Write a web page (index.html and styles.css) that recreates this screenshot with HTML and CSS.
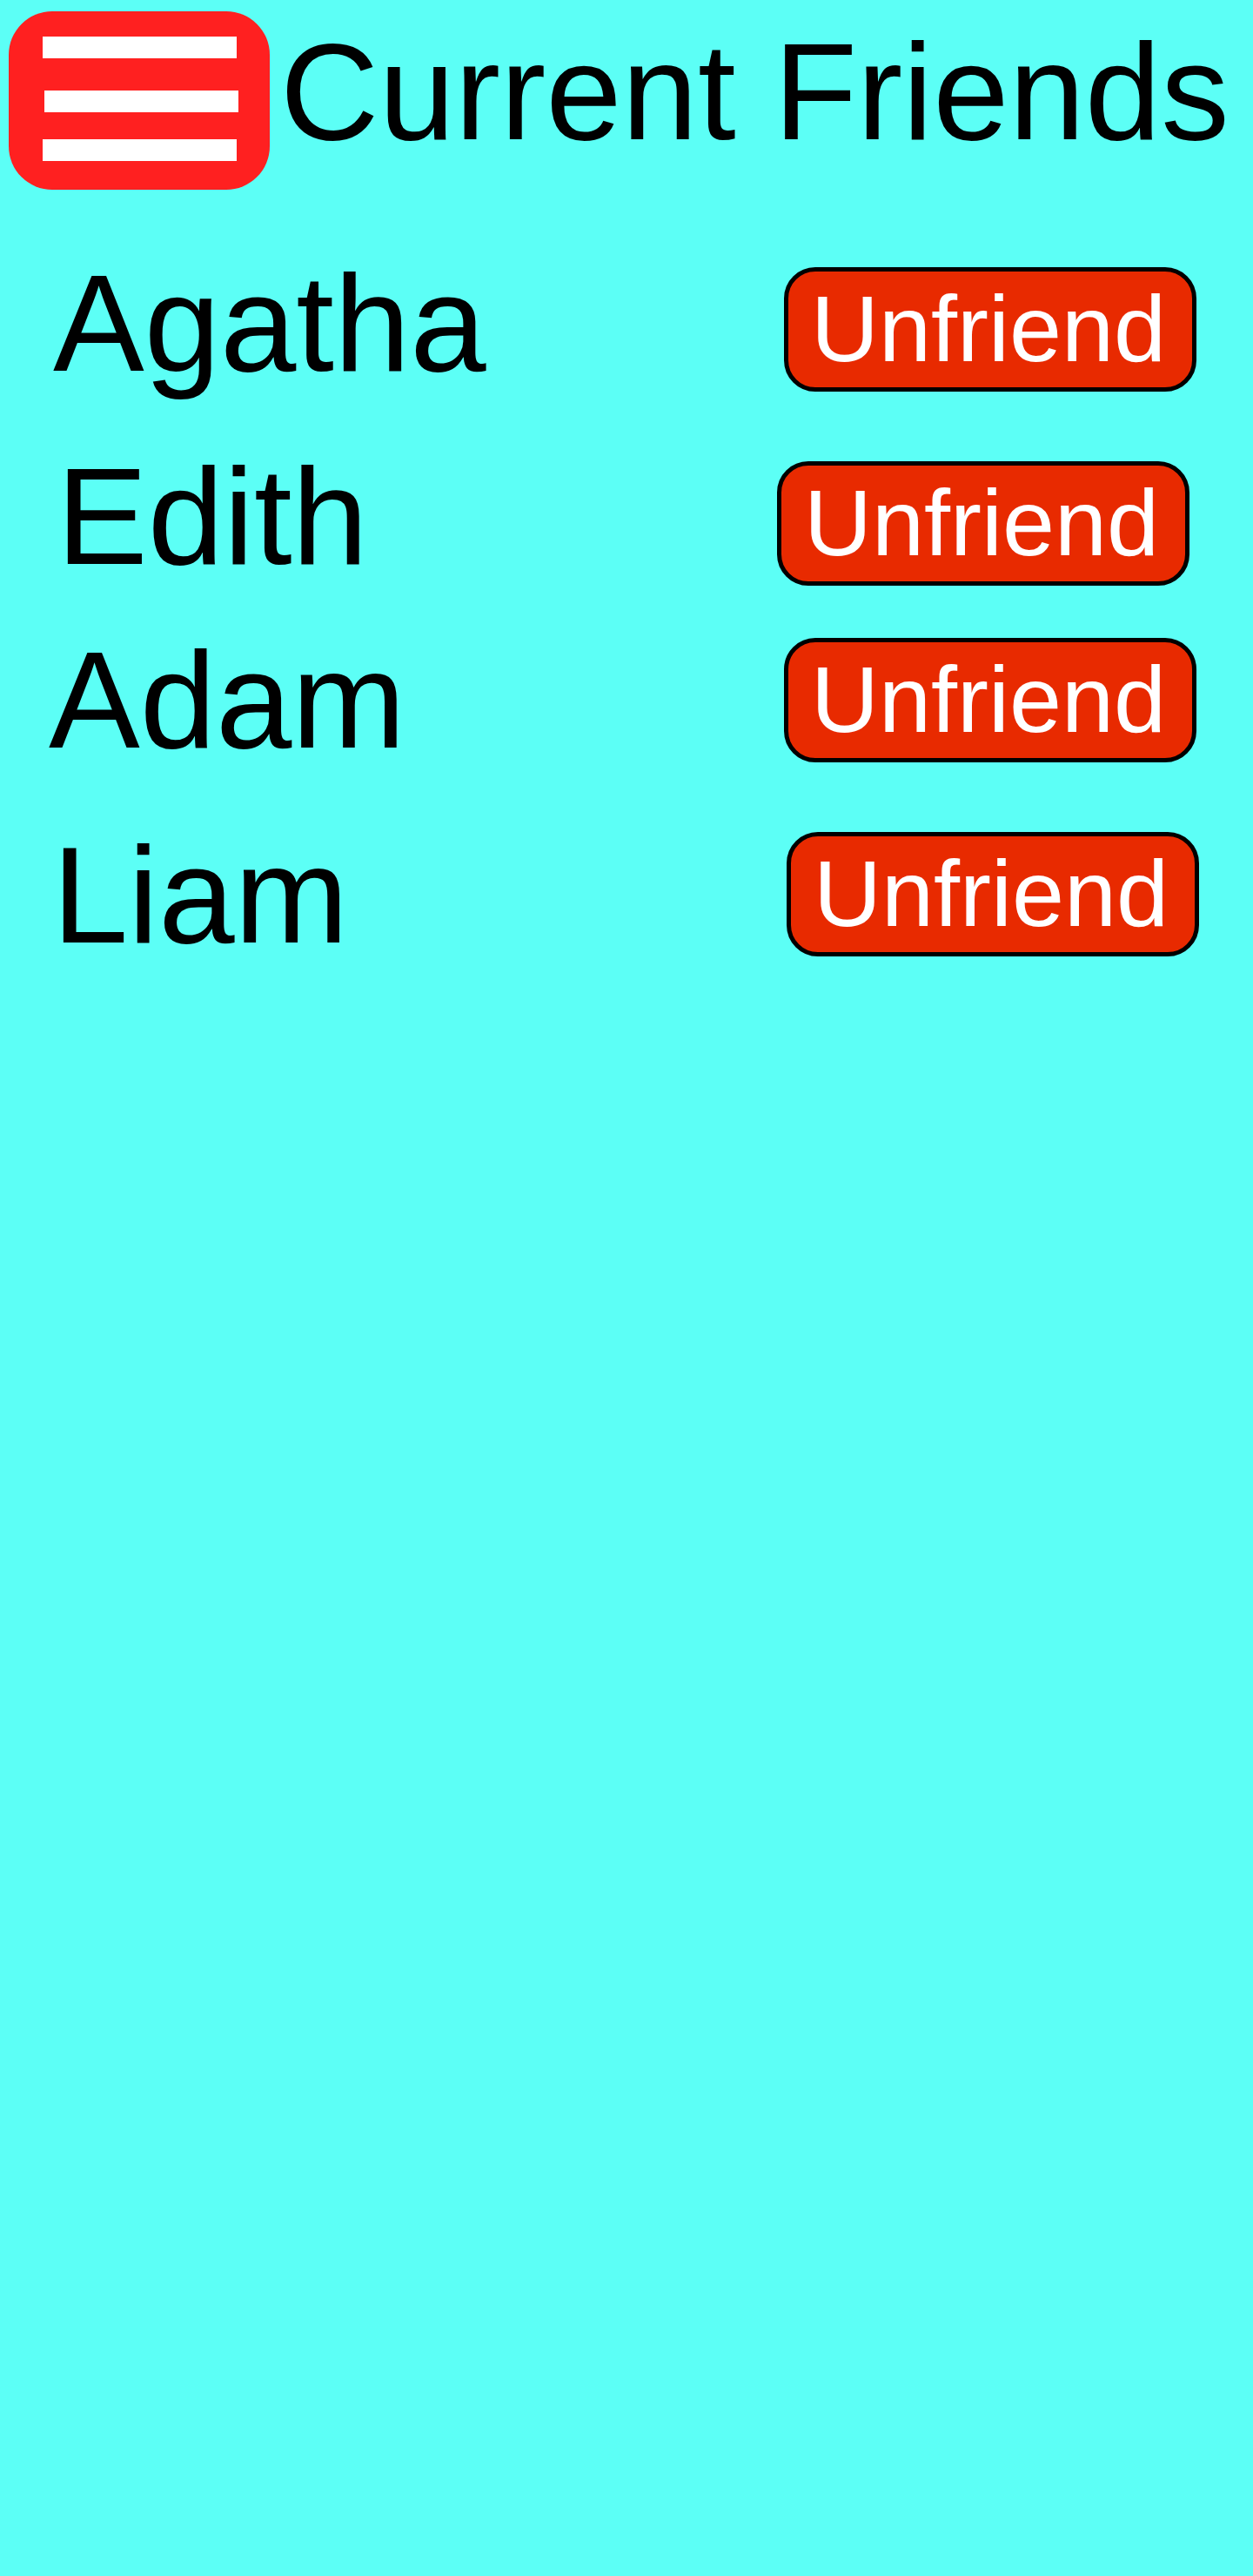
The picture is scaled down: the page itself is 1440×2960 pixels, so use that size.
FILE: index.html
```html
<!DOCTYPE html>
<html lang="en">
<head>
<meta charset="utf-8">
<title>Current Friends</title>
<link rel="stylesheet" href="styles.css">
</head>
<body>
<header class="header">
  <button class="menu" aria-label="Menu">
    <span class="menu__bar"></span>
    <span class="menu__bar menu__bar--mid"></span>
    <span class="menu__bar"></span>
  </button>
  <h1 class="title">Current Friends</h1>
</header>
<main class="list">
  <div class="row row--agatha">
    <span class="name">Agatha</span>
    <button class="unfriend">Unfriend</button>
  </div>
  <div class="row row--edith">
    <span class="name">Edith</span>
    <button class="unfriend">Unfriend</button>
  </div>
  <div class="row row--adam">
    <span class="name">Adam</span>
    <button class="unfriend">Unfriend</button>
  </div>
  <div class="row row--liam">
    <span class="name">Liam</span>
    <button class="unfriend">Unfriend</button>
  </div>
</main>
</body>
</html>
```
FILE: styles.css
```css
* { box-sizing: border-box; }
html, body {
  margin: 0;
  padding: 0;
  background: #5cfff6;
  min-height: 2960px;
  font-family: "Liberation Sans", Arial, sans-serif;
  color: #000;
}
.header {
  display: flex;
  align-items: flex-start;
  padding: 13px 0 0 10px;
}
.menu {
  width: 300px;
  height: 205px;
  background: #ff2020;
  border: none;
  border-radius: 50px;
  padding: 29px 0 0 39px;
  display: flex;
  flex-direction: column;
  align-items: flex-start;
  gap: 37px;
  flex-shrink: 0;
}
.menu__bar {
  display: block;
  width: 223px;
  height: 25px;
  background: #fff;
}
.menu__bar--mid {
  margin-left: 2px;
  margin-bottom: -6px;
}
.title {
  margin: 3px 0 0 12px;
  font-size: 157px;
  font-weight: normal;
  line-height: 1.15;
  white-space: nowrap;
}
.list {
  display: flex;
  flex-direction: column;
  gap: 80px;
  margin-top: 89px;
}
.row {
  display: flex;
  justify-content: space-between;
  align-items: flex-start;
  padding: 0 65px 0 61px;
  height: 143px;
}
.name {
  font-size: 157px;
  line-height: 143px;
  margin-top: -7px;
}
.unfriend {
  width: 474px;
  height: 143px;
  background: #e82a00;
  border: 5px solid #000;
  border-radius: 36px;
  color: #fff;
  font-family: "Liberation Sans", Arial, sans-serif;
  font-size: 108px;
  line-height: 1.15;
  padding: 0 4px 0 0;
  display: flex;
  align-items: center;
  justify-content: center;
}
.row--edith { padding-left: 65px; padding-right: 73px; }
.row--edith .name { margin-top: -8px; }
.row--adam { margin-top: -20px; padding-left: 56px; }
.row--adam .name { margin-top: 0; }
.row--liam { padding-left: 60px; padding-right: 62px; }
.row--liam .name { margin-top: 1px; }
```
